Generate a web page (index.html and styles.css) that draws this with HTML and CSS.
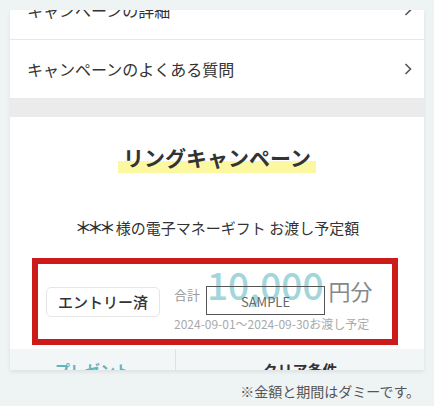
FILE: index.html
```html
<!DOCTYPE html>
<html lang="ja">
<head>
    <meta charset="UTF-8">
    <meta name="viewport" content="width=device-width, initial-scale=1.0">
    <title>リングキャンペーン</title>
    <link rel="stylesheet" href="styles.css">
</head>
<body>
    <div class="page">
        <div class="card">
            <div class="card-inner">
                <a class="menu-row" href="#">
                    <span>キャンペーンの詳細</span>
                    <svg class="chevron" viewBox="0 0 8 12" width="8" height="12"><path d="M1.5 1 L6.5 6 L1.5 11" fill="none" stroke="#555" stroke-width="1.6"/></svg>
                </a>
                <a class="menu-row" href="#">
                    <span>キャンペーンのよくある質問</span>
                    <svg class="chevron" viewBox="0 0 8 12" width="8" height="12"><path d="M1.5 1 L6.5 6 L1.5 11" fill="none" stroke="#555" stroke-width="1.6"/></svg>
                </a>

                <div class="band"></div>

                <div class="campaign">
                    <h2 class="campaign-title"><span>リングキャンペーン</span></h2>
                    <p class="gift-label"><span class="mask">＊＊＊</span>様の電子マネーギフト お渡し予定額</p>

                    <div class="gift-box">
                        <div class="entry-badge">エントリー済</div>
                        <div class="gift-info">
                            <div class="amount-line">
                                <span class="amount-prefix">合計</span>
                                <span class="amount-value">10,000</span>
                                <span class="amount-unit">円分</span>
                            </div>
                            <div class="amount-period">2024-09-01〜2024-09-30お渡し予定</div>
                            <div class="sample-mark">SAMPLE</div>
                        </div>
                    </div>
                </div>

                <div class="tabs">
                    <div class="tab active">プレゼント</div>
                    <div class="tab">クリア条件</div>
                </div>
            </div>
        </div>

        <p class="note">※金額と期間はダミーです。</p>
    </div>
</body>
</html>
```

FILE: styles.css
```css
* {
    margin: 0;
    padding: 0;
    box-sizing: border-box;
}

body {
    font-family: "Noto Sans CJK JP", "Noto Sans", sans-serif;
    background-color: #eef3f4;
    color: #333;
}

.page {
    width: 434px;
    height: 406px;
    padding: 10px 10px 0;
    overflow: hidden;
}

.card {
    background-color: white;
    height: 360px;
    overflow: hidden;
    box-shadow: 0 2px 4px rgba(0, 0, 0, 0.08);
}

.card-inner {
    margin-top: -29px;
}

.menu-row {
    display: flex;
    justify-content: space-between;
    align-items: center;
    height: 59px;
    padding: 0 12px 0 17px;
    border-bottom: 1px solid #e8e8e8;
    color: #333;
    text-decoration: none;
    font-size: 16px;
}

.chevron {
    display: block;
}

.band {
    height: 18px;
    background-color: #ebebeb;
}

.campaign {
    text-align: center;
    padding-top: 24px;
}

.campaign-title {
    font-size: 21px;
    font-weight: 700;
    line-height: 32px;
    color: #333;
}

.campaign-title span {
    display: inline-block;
    padding: 0 5px;
    background: linear-gradient(transparent 62%, #fcf8a2 62%, #fcf8a2 100%);
}

.gift-label {
    margin-top: 43px;
    font-size: 15px;
    line-height: 22px;
    color: #333;
}

.gift-label .mask {
    font-size: 17px;
    font-weight: 500;
    letter-spacing: -5px;
    margin-right: 5px;
}

.gift-box {
    display: flex;
    align-items: center;
    width: 366px;
    height: 87px;
    margin: 19px 0 0 22px;
    padding: 0 8px;
    border: 6px solid #cc1b1b;
    text-align: left;
}

.entry-badge {
    width: 114px;
    height: 30px;
    line-height: 28px;
    border: 1px solid #e6e6e6;
    border-radius: 5px;
    text-align: center;
    font-size: 15px;
    font-weight: 500;
    color: #333;
}

.gift-info {
    position: relative;
    align-self: flex-start;
    margin: 2px 0 0 14px;
}

.amount-line {
    display: flex;
    align-items: baseline;
    height: 36px;
    white-space: nowrap;
}

.amount-prefix {
    font-size: 13px;
    color: #999;
    margin-right: 7px;
}

.amount-value {
    font-size: 37px;
    font-weight: 500;
    line-height: 36px;
    color: #a3d6db;
}

.amount-unit {
    font-size: 22px;
    color: #888;
    margin-left: 5px;
}

.amount-period {
    margin-top: 13px;
    font-size: 12px;
    line-height: 17px;
    color: #aaa;
    white-space: nowrap;
}

.sample-mark {
    position: absolute;
    left: 32px;
    top: 20px;
    width: 119px;
    height: 29px;
    border: 1px solid #555;
    text-align: center;
    font-size: 13px;
    line-height: 30px;
    color: #666;
}

.tabs {
    display: grid;
    grid-template-columns: 166px 1fr;
    margin-top: 4px;
    background-color: #f3f6f6;
}

.tab {
    height: 44px;
    padding-top: 10px;
    text-align: center;
    font-size: 15px;
    font-weight: 700;
    color: #333;
}

.tab.active {
    color: #5db7c0;
    border-right: 1px solid #dde3e3;
}

.note {
    margin-top: 11px;
    padding-right: 4px;
    text-align: right;
    font-size: 14px;
    color: #555;
}
```
